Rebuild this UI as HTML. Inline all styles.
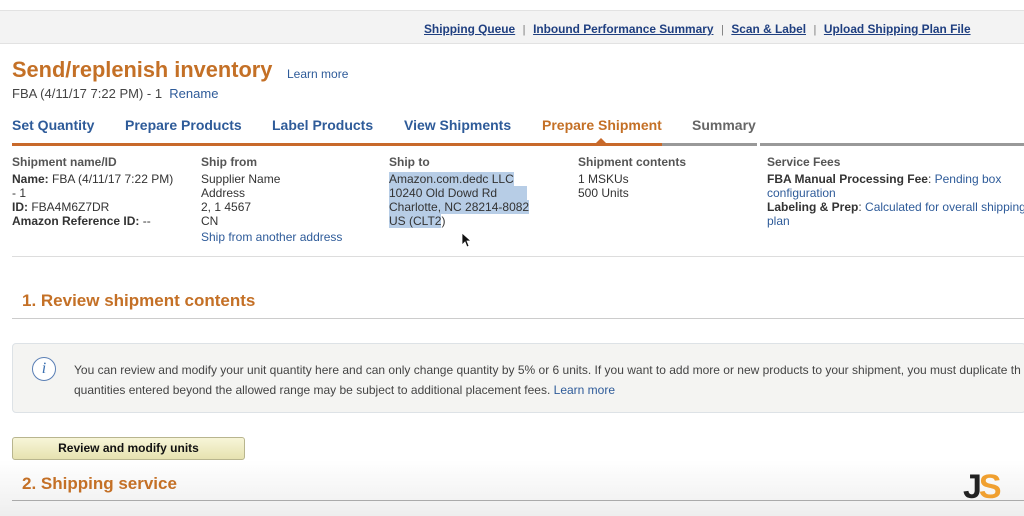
<!DOCTYPE html>
<html><head><style>
body{margin:0;width:1024px;height:516px;overflow:hidden;background:#fff;font-family:"Liberation Sans",Arial,sans-serif;position:relative;color:#333}
.a{position:absolute;white-space:nowrap}
.top{position:absolute;left:0;top:10px;width:1024px;height:32px;background:#f3f3f3;border-top:1px solid #e2e2e2;border-bottom:1px solid #e2e2e2}
.tl{font-size:11.9px;font-weight:bold;color:#1f3f80;text-decoration:underline}
.sep{font-size:11px;color:#777}
.tab{font-size:14px;font-weight:bold;color:#2e5b99;top:117px}
.h{font-size:12px;font-weight:bold;color:#555;top:155px}
.c{font-size:12px;line-height:14px;top:172px}
.lk{color:#2e5b99}
.sel{background:#b7cde6}
</style></head><body>
<div class="top"></div>
<div class="a" style="top:20px;left:424px"><span class="tl">Shipping Queue</span> <span class="sep">&nbsp;|&nbsp;</span> <span class="tl">Inbound Performance Summary</span> <span class="sep">&nbsp;|&nbsp;</span> <span class="tl">Scan &amp; Label</span> <span class="sep">&nbsp;|&nbsp;</span> <span class="tl">Upload Shipping Plan File</span></div>
<div class="a" style="left:12px;top:57px;font-size:21.8px;font-weight:bold;color:#c47026">Send/replenish inventory</div>
<div class="a lk" style="left:287px;top:67px;font-size:12px">Learn more</div>
<div class="a" style="left:12px;top:86px;font-size:13px;color:#444">FBA (4/11/17 7:22 PM) - 1 &nbsp;<span class="lk">Rename</span></div>
<div class="a tab" style="left:12px">Set Quantity</div>
<div class="a tab" style="left:125px">Prepare Products</div>
<div class="a tab" style="left:272px">Label Products</div>
<div class="a tab" style="left:404px">View Shipments</div>
<div class="a tab" style="left:542px;color:#c47026">Prepare Shipment</div>
<div class="a tab" style="left:692px;color:#666">Summary</div>
<div class="a" style="left:12px;top:143px;width:650px;height:3px;background:#c8692a"></div>
<div class="a" style="left:662px;top:143px;width:95px;height:3px;background:#999"></div>
<div class="a" style="left:760px;top:143px;width:264px;height:3px;background:#999"></div>
<div class="a" style="left:596px;top:138px;width:0;height:0;border-left:5px solid transparent;border-right:5px solid transparent;border-bottom:5px solid #c8692a"></div>
<div class="a h" style="left:12px">Shipment name/ID</div>
<div class="a h" style="left:201px">Ship from</div>
<div class="a h" style="left:389px">Ship to</div>
<div class="a h" style="left:578px">Shipment contents</div>
<div class="a h" style="left:767px">Service Fees</div>
<div class="a c" style="left:12px"><b>Name:</b> FBA (4/11/17 7:22 PM)<br>- 1<br><b>ID:</b> FBA4M6Z7DR<br><b>Amazon Reference ID:</b> --</div>
<div class="a c" style="left:201px">Supplier Name<br>Address<br>2, 1 4567<br>CN<br><span class="lk" style="line-height:18px">Ship from another address</span></div>
<div class="a c" style="left:389px"><span class="sel">Amazon.com.dedc LLC</span><br><span class="sel">10240 Old Dowd Rd&nbsp;&nbsp;&nbsp;&nbsp;&nbsp;&nbsp;&nbsp;&nbsp;&nbsp;</span><br><span class="sel">Charlotte, NC 28214-8082</span><br><span class="sel">US (CLT2</span>)</div>
<svg class="a" style="left:461px;top:232px" width="10" height="16" viewBox="0 0 10 16"><path d="M1 1 L1 13 L4 10 L6 15 L8 14 L6 9 L10 9 Z" fill="#111" stroke="#fff" stroke-width="0.8"/></svg>
<div class="a c" style="left:578px">1 MSKUs<br>500 Units</div>
<div class="a c" style="left:767px"><b>FBA Manual Processing Fee</b>: <span class="lk">Pending box</span><br><span class="lk">configuration</span><br><b>Labeling &amp; Prep</b>: <span class="lk">Calculated for overall shipping</span><br><span class="lk">plan</span></div>
<div class="a" style="left:12px;top:256px;width:1012px;height:1px;background:#ddd"></div>
<div class="a" style="left:22px;top:291px;font-size:17px;font-weight:bold;color:#c47026">1. Review shipment contents</div>
<div class="a" style="left:12px;top:318px;width:1012px;height:1px;background:#ccc"></div>
<div class="a" style="left:12px;top:343px;width:1012px;height:68px;background:#f4f4f2;border:1px solid #dde2e6;border-radius:4px"></div>
<div class="a" style="left:32px;top:357px;width:22px;height:22px;border:1.5px solid #5a7fb5;border-radius:50%;background:#fff;text-align:center;font:italic 16px 'Liberation Serif',serif;color:#3a6fb0;line-height:22px">i</div>
<div class="a" style="left:74px;top:360px;font-size:12px;line-height:20px;color:#444">You can review and modify your unit quantity here and can only change quantity by 5% or 6 units. If you want to add more or new products to your shipment, you must duplicate th<br>quantities entered beyond the allowed range may be subject to additional placement fees. <span class="lk">Learn more</span></div>
<div class="a" style="left:12px;top:437px;width:231px;height:21px;border:1px solid #b8b58e;border-radius:3px;background:linear-gradient(#f7f5d8,#e6e2b0);text-align:center;font-size:12px;font-weight:bold;color:#111;line-height:21px">Review and modify units</div>
<div class="a" style="left:0;top:460px;width:1024px;height:56px;background:linear-gradient(#fff,#eee)"></div>
<div class="a" style="left:22px;top:474px;font-size:17px;font-weight:bold;color:#c47026">2. Shipping service</div>
<div class="a" style="left:12px;top:500px;width:1012px;height:1px;background:#aaa"></div>
<div class="a" style="left:963px;top:468px;font-size:34px;font-weight:bold;color:#222;letter-spacing:-3px">J<span style="color:#f0a030">S</span></div>
</body></html>
